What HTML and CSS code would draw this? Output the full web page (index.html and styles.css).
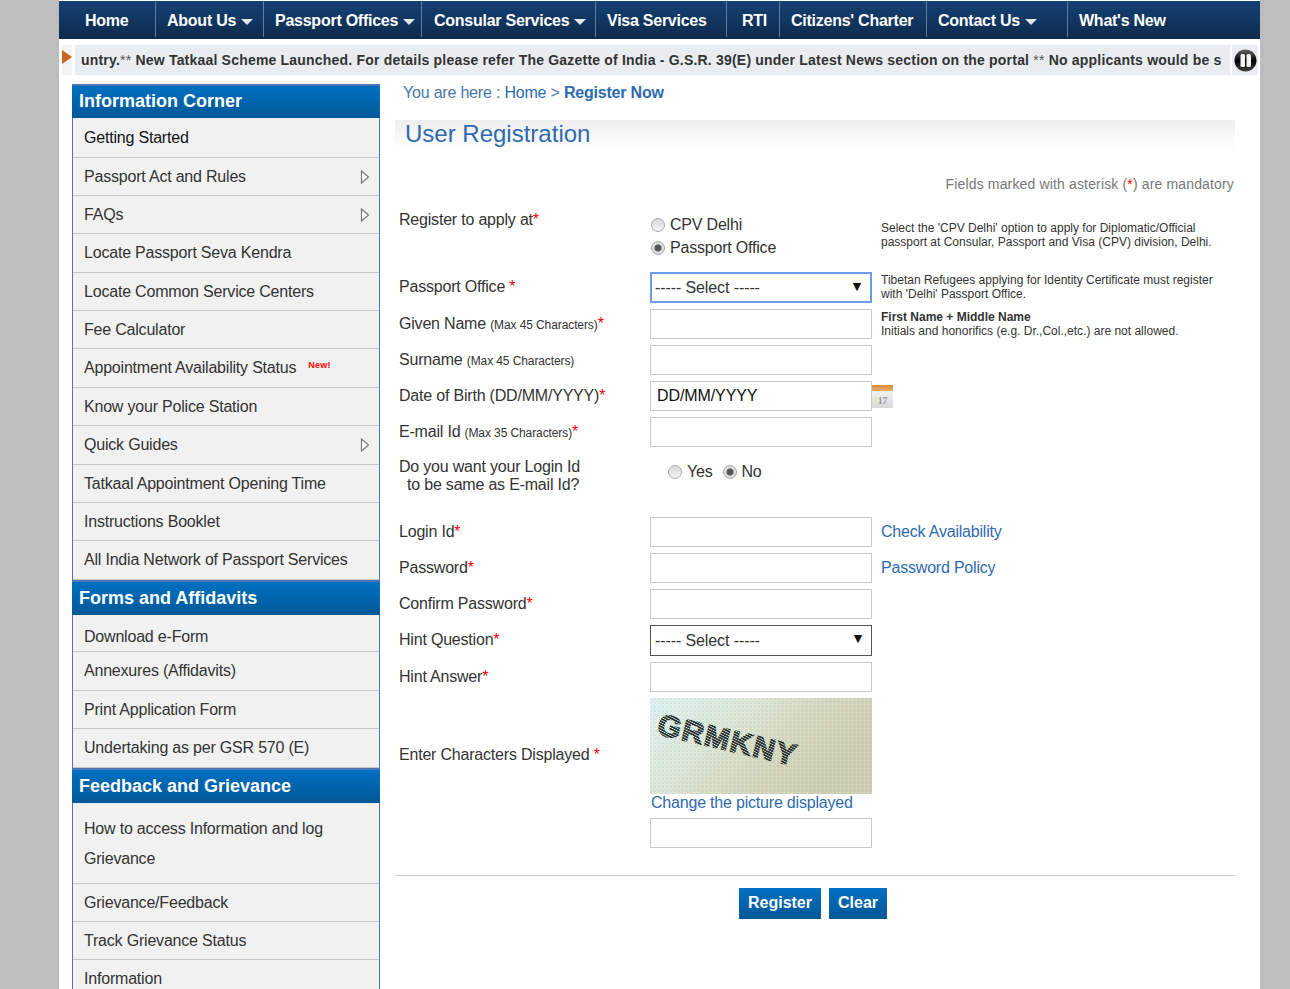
FILE: index.html
```html
<!DOCTYPE html>
<html lang="en">
<head>
<meta charset="utf-8">
<title>User Registration</title>
<link rel="stylesheet" href="styles.css">
</head>
<body>
<div class="page">
  <nav class="nav">
    <a class="nav-item n1">Home</a>
    <a class="nav-item n2">About Us<i class="caret"></i></a>
    <a class="nav-item n3">Passport Offices<i class="caret"></i></a>
    <a class="nav-item n4">Consular Services<i class="caret"></i></a>
    <a class="nav-item n5">Visa Services</a>
    <a class="nav-item n6">RTI</a>
    <a class="nav-item n7">Citizens' Charter</a>
    <a class="nav-item n8">Contact Us<i class="caret"></i></a>
    <a class="nav-item n9">What's New</a>
  </nav>

  <div class="ticker-row">
    <div class="tick-arrow"><svg width="10" height="14" viewBox="0 0 10 14"><path d="M0 0L10 7L0 14Z" fill="#c8641e"/></svg></div>
    <div class="ticker"><p>untry.<span class="star">**</span> New Tatkaal Scheme Launched. For details please refer The Gazette of India - G.S.R. 39(E) under Latest News section on the portal <span class="star">**</span> No applicants would be sent to the Passport Seva Kendra</p></div>
    <div class="pause"><svg width="23" height="23" viewBox="0 0 23 23"><defs><linearGradient id="pg" x1="0" y1="0" x2="0" y2="1"><stop offset="0" stop-color="#666"/><stop offset=".5" stop-color="#000"/><stop offset="1" stop-color="#444"/></linearGradient></defs><circle cx="11.5" cy="11.5" r="11" fill="url(#pg)"/><rect x="6.5" y="5" width="4.5" height="13" rx="1.5" fill="#f4f4f4"/><rect x="12.5" y="5" width="4.5" height="13" rx="1.5" fill="#f4f4f4"/></svg></div>
  </div>

  <div class="content">
    <aside class="side">
      <h3 class="side-head first">Information Corner</h3>
      <ul class="side-list list-a">
        <li class="dark">Getting Started</li>
        <li class="more">Passport Act and Rules<svg class="arr" width="10" height="14" viewBox="0 0 10 14"><path d="M1.5 1L8.5 7L1.5 13Z" fill="#fff" stroke="#777" stroke-width="1.2"/></svg></li>
        <li class="more">FAQs<svg class="arr" width="10" height="14" viewBox="0 0 10 14"><path d="M1.5 1L8.5 7L1.5 13Z" fill="#fff" stroke="#777" stroke-width="1.2"/></svg></li>
        <li>Locate Passport Seva Kendra</li>
        <li>Locate Common Service Centers</li>
        <li>Fee Calculator</li>
        <li>Appointment Availability Status<sup class="new">New!</sup></li>
        <li>Know your Police Station</li>
        <li class="more">Quick Guides<svg class="arr" width="10" height="14" viewBox="0 0 10 14"><path d="M1.5 1L8.5 7L1.5 13Z" fill="#fff" stroke="#777" stroke-width="1.2"/></svg></li>
        <li>Tatkaal Appointment Opening Time</li>
        <li>Instructions Booklet</li>
        <li>All India Network of Passport Services</li>
      </ul>
      <h3 class="side-head">Forms and Affidavits</h3>
      <ul class="side-list list-b">
        <li>Download e-Form</li>
        <li>Annexures (Affidavits)</li>
        <li>Print Application Form</li>
        <li>Undertaking as per GSR 570 (E)</li>
      </ul>
      <h3 class="side-head">Feedback and Grievance</h3>
      <ul class="side-list">
        <li class="tall">How to access Information and log Grievance</li>
        <li>Grievance/Feedback</li>
        <li>Track Grievance Status</li>
        <li>Information</li>
      </ul>
    </aside>

    <main class="main">
      <p class="crumbs">You are here : <a>Home</a> &gt; <b>Register Now</b></p>
      <h1 class="title">User Registration</h1>
      <p class="mandatory">Fields marked with asterisk (<em>*</em>) are mandatory</p>

      <form class="form">
        <div class="row r-apply">
          <label class="lab">Register to apply at<em>*</em></label>
          <div class="radios">
            <label class="radio"><input type="radio" name="apply">CPV Delhi</label>
            <label class="radio"><input type="radio" name="apply" checked>Passport Office</label>
          </div>
          <p class="hint hint-apply">Select the 'CPV Delhi' option to apply for Diplomatic/Official passport at Consular, Passport and Visa (CPV) division, Delhi.</p>
        </div>
        <div class="row r-sel">
          <label class="lab">Passport Office <em>*</em></label>
          <div class="sel focus"><select><option>----- Select -----</option></select></div>
          <p class="hint">Tibetan Refugees applying for Identity Certificate must register with 'Delhi' Passport Office.</p>
        </div>
        <div class="row">
          <label class="lab">Given Name <small>(Max 45 Characters)</small><em>*</em></label>
          <input class="txt" type="text">
          <p class="hint"><b>First Name + Middle Name</b><br>Initials and honorifics (e.g. Dr.,Col.,etc.) are not allowed.</p>
        </div>
        <div class="row">
          <label class="lab">Surname <small>(Max 45 Characters)</small></label>
          <input class="txt" type="text">
        </div>
        <div class="row">
          <label class="lab">Date of Birth (DD/MM/YYYY)<em>*</em></label>
          <input class="txt" type="text" value="DD/MM/YYYY">
          <svg class="cal" width="21" height="23" viewBox="0 0 21 23"><defs><linearGradient id="cg" x1="0" y1="0" x2="0" y2="1"><stop offset="0" stop-color="#fafafa"/><stop offset="1" stop-color="#d8d8d8"/></linearGradient><linearGradient id="co" x1="0" y1="0" x2="0" y2="1"><stop offset="0" stop-color="#d98a3c"/><stop offset="1" stop-color="#eeaa66"/></linearGradient></defs><rect width="21" height="23" fill="url(#cg)"/><rect width="21" height="6" fill="url(#co)"/><text x="10.5" y="19" class="cal-num" text-anchor="middle">17</text></svg>
        </div>
        <div class="row">
          <label class="lab">E-mail Id <small>(Max 35 Characters)</small><em>*</em></label>
          <input class="txt" type="text">
        </div>
        <div class="row r-same">
          <label class="lab two">Do you want your Login Id<span>to be same as E-mail Id?</span></label>
          <div class="yesno">
            <label class="radio"><input type="radio" name="same">Yes</label>
            <label class="radio"><input type="radio" name="same" checked>No</label>
          </div>
        </div>
        <div class="row">
          <label class="lab">Login Id<em>*</em></label>
          <input class="txt" type="text">
          <a class="side-link">Check Availability</a>
        </div>
        <div class="row">
          <label class="lab">Password<em>*</em></label>
          <input class="txt" type="text">
          <a class="side-link">Password Policy</a>
        </div>
        <div class="row">
          <label class="lab">Confirm Password<em>*</em></label>
          <input class="txt" type="text">
        </div>
        <div class="row r-sel">
          <label class="lab">Hint Question<em>*</em></label>
          <div class="sel"><select><option>----- Select -----</option></select></div>
        </div>
        <div class="row">
          <label class="lab">Hint Answer<em>*</em></label>
          <input class="txt" type="text">
        </div>
        <div class="row r-captcha">
          <label class="lab">Enter Characters Displayed <em>*</em></label>
          <div class="captcha-col">
            <svg class="captcha" width="222" height="96" viewBox="0 0 222 96">
              <defs>
                <linearGradient id="bgc" x1="0" y1="0" x2="1" y2="0.45"><stop offset="0" stop-color="#d9f0f0"/><stop offset=".4" stop-color="#d6e2d0"/><stop offset=".72" stop-color="#cccfb3"/><stop offset="1" stop-color="#c6c8a8"/></linearGradient>
                <pattern id="mesh" width="4" height="4" patternUnits="userSpaceOnUse"><path d="M0 2H4M2 0V4" stroke="#fff" stroke-opacity=".28" stroke-width="1"/><rect x="1" y="1" width="1" height="1" fill="#8a9a78" fill-opacity=".28"/></pattern>
                <pattern id="ink" width="3" height="2.4" patternUnits="userSpaceOnUse" patternTransform="rotate(14)"><rect width="3" height="1.6" fill="#222c2c"/></pattern>
              </defs>
              <rect width="222" height="96" fill="url(#bgc)"/>
              <rect width="222" height="96" fill="url(#mesh)"/>
              <text class="cap-text" transform="translate(6 36) rotate(13)" fill="url(#ink)" stroke="url(#ink)" stroke-width="1.5">GRMKNY</text>
            </svg>
            <a class="cap-link">Change the picture displayed</a>
            <input class="txt" type="text">
          </div>
        </div>
        <div class="actions">
          <button type="button" class="btn">Register</button>
          <button type="button" class="btn">Clear</button>
        </div>
      </form>
    </main>
  </div>
</div>
</body>
</html>
```
FILE: styles.css
```css
* { box-sizing: border-box; }
html, body { margin: 0; padding: 0; height: 100%; overflow: hidden; }
body { background: #bdbdbd; font-family: "Liberation Sans", Arial, sans-serif; font-size: 16px; color: #333; letter-spacing: -.2px; }
.page { width: 1201px; height: 989px; margin-left: 59px; background: #fff; padding-top: 1px; overflow: hidden; }
p, h1, h3, ul { margin: 0; padding: 0; }
em { color: #f00; font-style: normal; }

.nav { display: flex; height: 38px; background: linear-gradient(#134173, #0f2b4d); }
.nav-item { display: flex; align-items: center; height: 36px; padding: 4px 0 0 11px; border-right: 1px solid #5b7ea3; color: #fff; font-weight: bold; font-size: 16px; letter-spacing: -.25px; white-space: nowrap; }
.n1 { width: 97px; padding-left: 26px; }
.n2 { width: 108px; }
.n3 { width: 158px; }
.n4 { width: 174px; padding-left: 12px; }
.n5 { width: 131px; }
.n6 { width: 53px; padding-left: 15px; }
.n7 { width: 147px; }
.n8 { width: 141px; }
.n9 { width: auto; border-right: 0; }
.caret { width: 0; height: 0; margin: 2px 0 0 5px; border: 6px solid transparent; border-top: 6px solid #e8e8e8; border-bottom: 0; }

.ticker-row { display: flex; height: 30px; margin-top: 6px; }
.tick-arrow { width: 10px; margin-left: 3px; background: #f3f3f3; padding-top: 5px; display: flex; align-items: flex-start; }
.ticker { width: 1155px; margin-left: 3px; background: #e9edf1; padding: 0 8px 0 6px; }
.ticker p { overflow: hidden; white-space: nowrap; font-weight: bold; font-size: 14px; line-height: 30px; letter-spacing: .2px; color: #333; }
.star { font-weight: normal; color: #555; }
.pause { width: 26px; margin-left: 2px; background: #e9edf1; display: flex; align-items: center; justify-content: center; }

.content { display: flex; padding: 9px 0 0 13px; }
.side { width: 308px; flex: none; border-left: 1px solid #4f74b5; border-right: 1px solid #4f74b5; }
.side-head { height: 35px; margin-left: -1px; margin-right: -1px; padding: 0 0 0 7px; background: linear-gradient(#0070c2, #005896); border-top: 2px solid #4f74b5; color: #fff; font-size: 18px; font-weight: bold; line-height: 33px; letter-spacing: 0; }
.side-head.first { height: 34px; line-height: 31px; }
.side-list { list-style: none; background: #f1f1f1; }
.side-list li { position: relative; height: 38.4px; padding-left: 11px; border-bottom: 1px solid #c8c8c8; line-height: 37px; color: #333; white-space: nowrap; }
.side-list li.dark { color: #111; }
.list-a li:first-child { height: 39.9px; padding-top: 1px; }
.list-a li:nth-child(2) { height: 37.9px; }
.list-b li:first-child { height: 37.8px; padding-top: 3px; }
.side-list li.tall { height: 81px; padding-top: 11px; line-height: 30px; white-space: normal; padding-right: 30px; }
.arr { position: absolute; right: 9px; top: 12px; }
.new { margin-left: 12px; font-size: 9px; font-weight: bold; color: #f00; line-height: 0; vertical-align: 5px; letter-spacing: .2px; }

.main { width: 840px; margin-left: 15px; }
.crumbs { padding-left: 8px; height: 36px; line-height: 18px; color: #4a76a8; }
.crumbs a { color: #2e6ab1; }
.crumbs b { color: #2e6ab1; }
.title { height: 30px; padding-left: 10px; background: linear-gradient(#eee, #fff); font-size: 24px; font-weight: normal; line-height: 28px; color: #2e6ab1; letter-spacing: 0; }
.mandatory { margin-top: 25px; height: 20px; padding-right: 1px; text-align: right; font-size: 14px; line-height: 18px; color: #777; letter-spacing: .15px; }

.form { padding-left: 4px; margin-top: 10px; }
.row { display: grid; grid-template-columns: 242px 222px 1fr; column-gap: 9px; align-items: start; height: 36px; position: relative; }
.lab { display: block; padding-top: 5px; line-height: 20px; color: #333; }
.lab small { font-size: 12px; letter-spacing: -.1px; }
.lab.two { line-height: 18px; }
.lab.two span { display: block; padding-left: 8px; }
.r-apply { height: 67px; }
.r-sel { height: 37px; }
.r-same { height: 64px; }
.r-captcha { height: 177px; }
.r-captcha .lab { padding-top: 47px; }
.radios { padding-top: 8px; }
.radio { display: flex; align-items: center; height: 23px; color: #333; }
.radio input { appearance: none; width: 14px; height: 14px; margin: 0 5px 0 1px; border: 1px solid #aaa; border-radius: 50%; background: linear-gradient(#d8d8d8, #f4f4f4); }
.radio input:checked { background: radial-gradient(circle, #555 0 3px, #ddd 4px); }
.hint { font-size: 12px; line-height: 14px; color: #333; padding-top: 1px; white-space: normal; letter-spacing: 0; }
.hint-apply { padding-top: 16px; }
.txt { display: block; width: 222px; height: 30px; padding: 0 6px; border: 1px solid #c8c8c8; background: #fff; font: 16px "Liberation Sans", Arial, sans-serif; letter-spacing: -.1px; color: #111; outline: none; }
.sel { position: relative; height: 31px; border: 1px solid #555; background: #fff; }
.sel.focus { border: 2px solid #6c9ce8; }
.sel::after { content: "▼"; position: absolute; right: 9px; top: 6px; font-size: 11px; line-height: 14px; color: #111; pointer-events: none; font-family: "DejaVu Sans", sans-serif; }
.sel select { appearance: none; display: block; width: 100%; height: 100%; padding: 0 4px; border: 0; background: transparent; font: 16px "Liberation Sans", Arial, sans-serif; letter-spacing: -.1px; color: #333; outline: none; }
.sel.focus select { padding: 0 3px; }
.cal { position: absolute; left: 473px; top: 4px; }
.cal-num { font: bold 10px "Liberation Serif", serif; fill: #999; }
.yesno { display: flex; gap: 9px; padding: 7px 0 0 17px; }
.side-link { line-height: 30px; color: #2e6ab1; }
.captcha { display: block; }
.cap-text { font: bold 30px "Liberation Sans", Arial, sans-serif; letter-spacing: 1.5px; }
.cap-link { display: block; height: 24px; padding-left: 1px; line-height: 18px; color: #2e6ab1; }
.actions { display: flex; justify-content: center; gap: 8px; width: 840px; margin-left: -4px; padding: 12px 4px 0 0; border-top: 1px solid #ccc; }
.btn { height: 31px; padding: 0 9px 2px; border: 0; background: linear-gradient(#0070c2, #005896); color: #fff; font: bold 16px "Liberation Sans", Arial, sans-serif; }
```
